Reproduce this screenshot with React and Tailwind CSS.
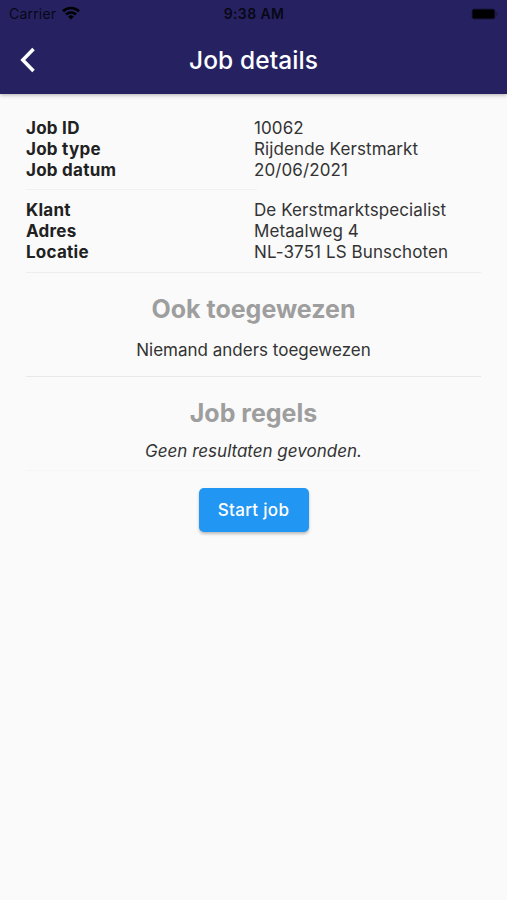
const jobRows = [
  ['Job ID', '10062'],
  ['Job type', 'Rijdende Kerstmarkt'],
  ['Job datum', '20/06/2021'],
];

const customerRows = [
  ['Klant', 'De Kerstmarktspecialist'],
  ['Adres', 'Metaalweg 4'],
  ['Locatie', 'NL-3751 LS Bunschoten'],
];

const InfoRows = ({ rows }) => (
  <dl className="text-[17px] leading-[20.8px]">
    {rows.map(([label, value]) => (
      <div key={label} className="flex">
        <dt className="w-[228px] font-bold tracking-[0.25px]">{label}</dt>
        <dd className="tracking-[0.1px] whitespace-nowrap text-[#333]">{value}</dd>
      </div>
    ))}
  </dl>
);

const StatusBar = () => (
  <div className="grid h-[27px] grid-cols-3 items-center px-[9px] text-[14px] text-[#080716]">
    <div className="flex items-center gap-[6px]">
      <span className="tracking-[0.2px]">Carrier</span>
      <svg className="-mt-[2px]" width="18" height="14" viewBox="0 0 18 14" fill="none" stroke="#000" strokeWidth="2.6">
        <path d="M1 5.2a11.5 11.5 0 0 1 16 0" />
        <path d="M4 8.5a7.2 7.2 0 0 1 10 0" />
        <path d="M9 13.5 6.2 10.7a4 4 0 0 1 5.6 0Z" fill="#000" stroke="none" />
      </svg>
    </div>
    <span className="pl-px text-center font-semibold tracking-[0.4px] whitespace-nowrap">9:38 AM</span>
    <svg className="justify-self-end" width="27" height="12" viewBox="0 0 27 12">
      <rect x="0.5" y="0.5" width="24" height="11" rx="3" fill="#000" fillOpacity="0.35" />
      <rect x="1.5" y="1.5" width="22" height="9" rx="1.5" fill="#000" />
      <path d="M25.5 4v4c1.6-.6 1.6-3.4 0-4Z" fill="#000" fillOpacity="0.4" />
    </svg>
  </div>
);

export default function App() {
  return (
    <div className="min-h-[900px] w-full bg-[#fafafa] font-[Inter,sans-serif] text-[#212121]">
      <header className="h-[94px] bg-[#262262] shadow-[0_1px_4px_rgba(0,0,0,0.3)]">
        <StatusBar />
        <div className="grid h-[66px] grid-cols-[1fr_auto_1fr] items-center text-white">
          <svg className="ml-[20px]" width="16" height="26" viewBox="0 0 16 26" fill="none" stroke="currentColor" strokeWidth="3.5">
            <path d="M13.5 2 2.8 13l10.7 11" />
          </svg>
          <h1 className="text-[24.5px] font-medium tracking-[0.1px]">Job details</h1>
        </div>
      </header>

      <main className="px-[26px] pt-[24px]">
        <InfoRows rows={jobRows} />
        <hr className="mt-[9px] mb-[10px] w-[231px] border-[#f0f0f0]" />
        <InfoRows rows={customerRows} />
        <hr className="mt-[9px] border-[#ededed]" />
        <section className="h-[103px] pt-[20px] text-center">
          <h2 className="text-[25px] leading-[32px] font-bold text-[#9e9e9e]">Ook toegewezen</h2>
          <p className="mt-[15px] text-[17px] leading-[21px] text-[#333]">Niemand anders toegewezen</p>
        </section>
        <hr className="border-[#e8e8e8]" />
        <section className="h-[93px] pt-[20px] text-center">
          <h2 className="text-[25px] leading-[32px] font-bold text-[#9e9e9e]">Job regels</h2>
          <p className="mt-[12px] text-[17px] leading-[21px] text-[#333] italic">Geen resultaten gevonden.</p>
        </section>
        <hr className="border-[#f5f5f5]" />
        <button className="mx-auto mt-[17px] block h-[44px] w-[110px] rounded-[5px] bg-[#2196f3] pt-px text-[17px] font-medium tracking-[0.3px] text-white shadow-[0_2px_3px_rgba(0,0,0,0.25)]">
          Start job
        </button>
      </main>
    </div>
  );
}
